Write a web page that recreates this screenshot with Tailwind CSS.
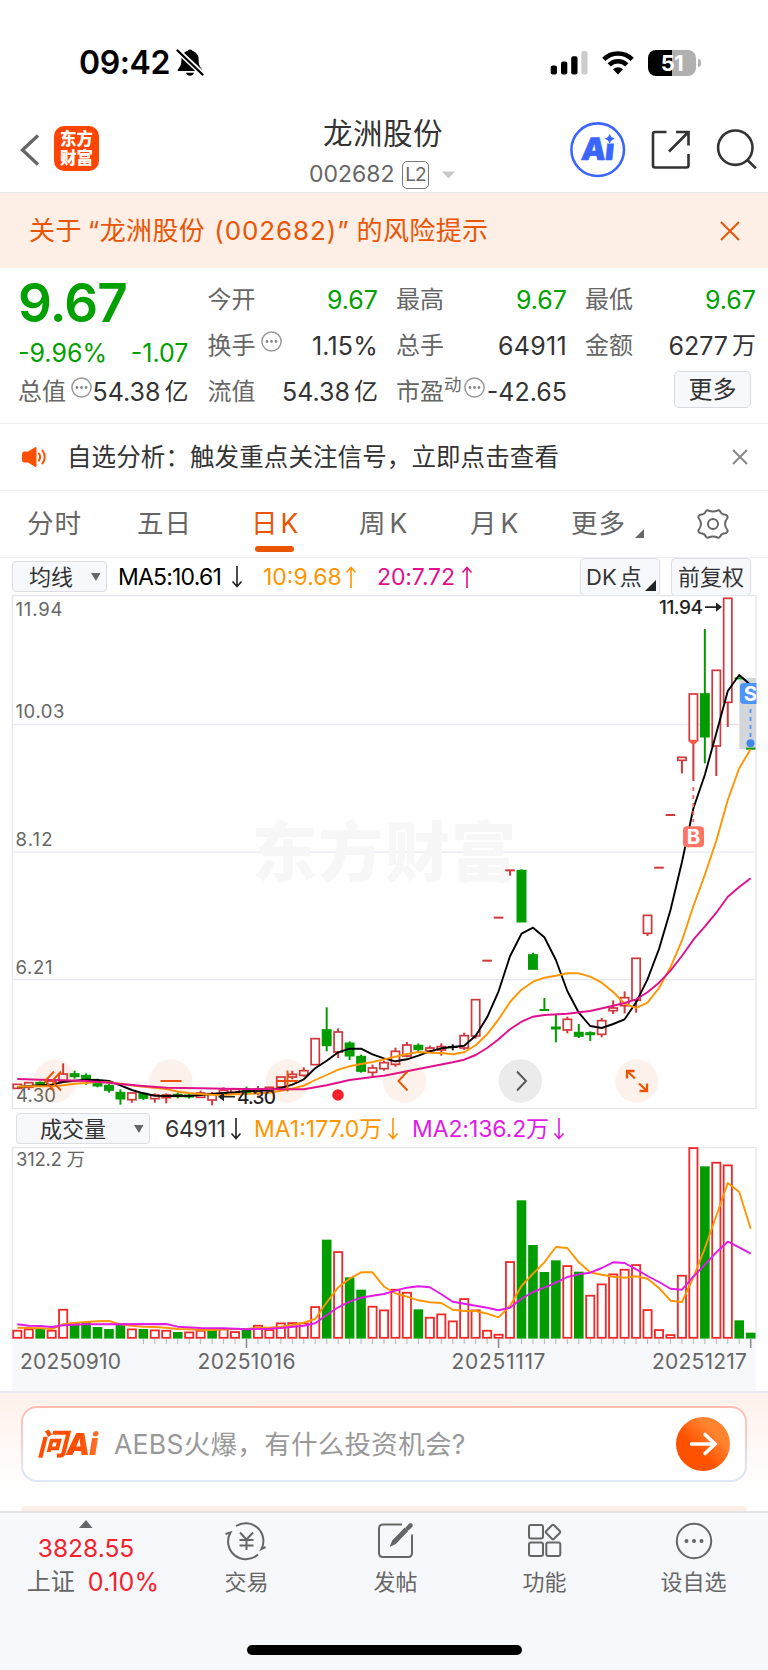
<!DOCTYPE html>
<html lang="zh-CN">
<head>
<meta charset="utf-8">
<title>龙洲股份 002682</title>
<script src="https://cdn.jsdelivr.net/npm/@tailwindcss/browser@4"></script>
</head>
<body class="bg-white">
<main class="relative flex h-[1670px] w-[768px] flex-col overflow-hidden bg-white font-['Inter','Noto_Sans_CJK_SC',sans-serif] font-[399] whitespace-nowrap text-[#333]">

  <!-- status bar -->
  <header class="flex h-[108px] shrink-0 items-start pt-[42px]">
    <div class="flex h-[42px] w-full items-center pl-[79px]">
      <span class="w-[97px] text-[32px] leading-none font-semibold tracking-[-0.4px] text-black">09:42</span>
      <svg class="h-[30px] w-[30px]" viewBox="0 0 30 30"><path d="M14 1.5c1.6 0 2.4.8 2.6 1.6 4 1.2 6 4.400 6 8.400 0 6 1.600 7.500 3.400 9.700.6.900.2 1.900-.8 1.900H2.800c-1 0-1.400-1-.8-1.900 1.800-2.200 3.400-3.700 3.400-9.700 0-4 2-7.200 6-8.400.2-.8 1-1.600 2.600-1.600z"/><path d="M10 24.800h8c-.6 2-2 3-4 3s-3.400-1-4-3z"/><path d="M.5 1.500 27.500 27" stroke="#fff" stroke-width="5.500"/><path d="M1.500 2.500 26.500 26.500" stroke="#000" stroke-width="2.300" stroke-linecap="round"/></svg>
      <svg class="ml-[344px] h-[26px] w-[38px]" viewBox="0 0 38 26"><g fill="#000"><rect x=".7" y="15.500" width="6.300" height="9" rx="2"/><rect x="11" y="11.500" width="6.300" height="13" rx="2"/><rect x="21.200" y="6.200" width="6.300" height="18.300" rx="2"/></g><rect x="31.300" y="1" width="6.300" height="23.500" rx="2" fill="#ccc"/></svg>
      <svg class="ml-[14px] h-[26px] w-[32px]" viewBox="0 0 32 26"><g fill="none" stroke="#000" stroke-width="4.600"><path d="M1.800 9.300a20.300 20.300 0 0 1 28.400 0"/><path d="M7.200 14.800a12.600 12.600 0 0 1 17.600 0"/></g><path d="M16 24.500l-5-5.200a7.400 7.400 0 0 1 10 0z"/></svg>
      <div class="ml-[14px] flex h-[26px] w-[48px] items-center justify-center rounded-[8px] bg-[linear-gradient(90deg,#000_50%,#b0b0b0_50%)] text-[22px] leading-none font-bold tracking-[-0.5px] text-white">51</div>
      <div class="ml-[2px] h-[8px] w-[3px] rounded-r-full bg-[#b5b5b5]"></div>
    </div>
  </header>

  <!-- title bar -->
  <section class="flex h-[85px] shrink-0 border-b border-[#e8e8e8]">
    <svg class="mt-[24px] ml-[18px] h-[36px] w-[24px]" viewBox="0 0 24 36"><path d="M20 3.500 4.500 18 20 32.500" fill="none" stroke="#666" stroke-width="3.300"/></svg>
    <div class="mt-[18px] ml-[12px] flex h-[45px] w-[45px] flex-col items-center justify-center rounded-[10px] bg-[#ff4500] text-[16.500px] leading-[19px] font-black text-white"><span>东方</span><span>财富</span></div>
    <div class="ml-[192px] flex w-[187px] flex-col">
      <div class="mt-[6px] ml-[32px] text-[29.500px] leading-[38px] tracking-[0.500px]">龙洲股份</div>
      <div class="mt-[8px] ml-[18px] flex h-[29px] items-center">
        <span class="w-[93px] text-[23px] leading-none text-[#666]">002682</span>
        <span class="flex h-[28px] w-[27px] items-center justify-center rounded-[5px] border-[1.500px] border-[#777] text-[19px] leading-none tracking-[-0.800px] text-[#666]">L2</span>
        <svg class="ml-[12px] h-[8px] w-[15px]" viewBox="0 0 15 8"><path d="M1 .5h13L7.500 7.500z" fill="#c8c8c8"/></svg>
      </div>
    </div>
    <svg class="ml-[80px] h-[84px] w-[210px] shrink-0" viewBox="558 108 210 84">
      <g fill="none" stroke="#3a66ff"><circle cx="597.700" cy="149.700" r="26.300" stroke-width="2.600"/></g>
      <text x="0" y="0" transform="translate(580.500 160) skewX(-6)" font-family="Inter" font-weight="900" font-size="31" fill="#3a66ff" stroke="#3a66ff" stroke-width=".6" textLength="33">Ai</text>
      <rect x="603.500" y="133" width="13" height="10.500" fill="#fff"/>
      <path d="M609.700 134l1.700 3.100 3.100 1.700-3.100 1.700-1.700 3.100-1.700-3.100-3.100-1.700 3.100-1.700z" fill="#3a66ff"/>
      <g fill="none" stroke="#333" stroke-width="2.600"><path d="M666.500 132H655q-2 0-2 2v31.500q0 2 2 2h31.500q2 0 2-2V154M676 132h12.500v13.500M688 132.500 669 151.500"/><circle cx="735.300" cy="147.700" r="17.200"/><path d="M747.500 160l8.300 8.300"/></g>
    </svg>
  </section>

  <!-- risk notice -->
  <section class="flex h-[75px] shrink-0 items-center bg-[#fdeee6] pl-[29px] text-[#ea5504]">
    <div class="flex w-[691px] text-[26px] leading-none tracking-[0.400px]"><span>关于</span><span class="ml-[6px]">“龙洲股份</span><span class="ml-[9px] tracking-[0.900px]">(002682)”</span><span class="ml-[7px] tracking-[0.400px]">的风险提示</span></div>
    <svg class="h-[20px] w-[20px]" viewBox="0 0 20 20"><path d="M1 1l18 18M19 1 1 19" stroke="#ea5504" stroke-width="2"/></svg>
  </section>

  <!-- quote -->
  <section class="flex h-[156px] shrink-0 gap-[19px] border-b border-[#efefef] pl-[18px] text-[24px] leading-[46px]">
    <div class="flex w-[170.500px] flex-col text-[#00a000]">
      <div class="flex h-[62px] items-center pt-[8px] text-[53px] leading-none font-semibold tracking-[-0.800px]">9.67</div>
      <div class="flex h-[46px] items-center justify-between text-[25px]"><span>-9.96%</span><span>-1.07</span></div>
      <div class="flex h-[32px] items-center text-[#333]"><span class="w-[53px] text-[#666]">总值</span><svg class="mb-[9px] h-[21px] w-[21px]" viewBox="0 0 21 21"><use href="#info"/></svg><span class="ml-auto flex text-[25px]">54.38<span class="ml-[4px] text-[24px]">亿</span></span></div>
    </div>
    <div class="flex w-[170.500px] flex-col pt-[9px]">
      <div class="flex h-[46px] items-center justify-between"><span class="text-[#666]">今开</span><span class="text-[25px] text-[#00a000]">9.67</span></div>
      <div class="flex h-[46px] items-center"><span class="w-[53px] text-[#666]">换手</span><svg class="mb-[9px] h-[21px] w-[21px]" viewBox="0 0 21 21"><use href="#info"/></svg><span class="ml-auto text-[25px] tracking-[0.200px]">1.15%</span></div>
      <div class="flex h-[46px] items-center justify-between"><span class="text-[#666]">流值</span><span class="flex text-[25px]">54.38<span class="ml-[4px] text-[24px]">亿</span></span></div>
    </div>
    <div class="-ml-[1px] flex w-[171px] flex-col pt-[9px]">
      <div class="flex h-[46px] items-center justify-between"><span class="text-[#666]">最高</span><span class="text-[25px] text-[#00a000]">9.67</span></div>
      <div class="flex h-[46px] items-center justify-between"><span class="text-[#666]">总手</span><span class="text-[25px] tracking-[0.300px]">64911</span></div>
      <div class="flex h-[46px] items-center"><span class="text-[#666]">市盈</span><span class="mb-[14px] text-[17.500px] leading-none text-[#666]">动</span><svg class="mb-[9px] ml-[2px] h-[21px] w-[21px]" viewBox="0 0 21 21"><use href="#info"/></svg><span class="ml-auto text-[25px]">-42.65</span></div>
    </div>
    <div class="-ml-[1px] flex w-[171px] flex-col pt-[9px]">
      <div class="flex h-[46px] items-center justify-between"><span class="text-[#666]">最低</span><span class="text-[25px] text-[#00a000]">9.67</span></div>
      <div class="flex h-[46px] items-center justify-between"><span class="text-[#666]">金额</span><span class="flex text-[25px]">6277<span class="ml-[4px] text-[24px]">万</span></span></div>
      <div class="mt-[2px] ml-auto flex h-[37px] w-[77px] -translate-x-[5px] items-center justify-center rounded-[5px] border border-[#d9dbe2] bg-[#f7f8fb] text-[24px] leading-none">更多</div>
    </div>
  </section>

  <!-- signal strip -->
  <section class="flex h-[67px] shrink-0 items-center border-b border-[#efefef] pl-[21px]">
    <svg class="h-[22px] w-[26px]" viewBox="0 0 26 22"><path d="M15.500 2v18q0 1.500-1.500.8L7 16.500H3.500q-2.500 0-2.500-2.500V8q0-2.500 2.500-2.500H7L14 1.200q1.500-.7 1.500.8z" fill="#ff5000"/><g fill="none" stroke="#ff5000" stroke-width="2" stroke-linecap="round"><path d="M18 7.500q2.200 3.500 0 7M21.500 4.500q4.500 6.500 0 13"/></g></svg>
    <span class="ml-[20px] w-[665px] text-[24.500px] leading-none tracking-[0.100px]">自选分析：触发重点关注信号，立即点击查看</span>
    <svg class="h-[16px] w-[16px]" viewBox="0 0 16 16"><path d="M1 1l14 14M15 1 1 15" stroke="#888" stroke-width="2"/></svg>
  </section>

  <!-- period tabs -->
  <nav class="relative flex h-[67px] shrink-0 items-center border-b border-[#efefef] pb-[1px] pl-[27px] text-[26.500px] leading-none tracking-[1px] text-[#666]">
    <span class="w-[110px]">分时</span><span class="w-[114px]">五日</span>
    <span class="w-[108px] text-[#ea5504]">日<span class="ml-[2px]">K</span></span>
    <span class="w-[111px]">周<span class="ml-[3px]">K</span></span>
    <span class="w-[101px]">月<span class="ml-[3px]">K</span></span>
    <span class="w-[64px]">更多</span>
    <svg class="mt-[20px] h-[9px] w-[9px]" viewBox="0 0 9 9"><path d="M9 0v9H0z" fill="#666"/></svg>
    <svg class="ml-[53px] h-[32px] w-[32px]" viewBox="-16 -16 32 32"><path d="M-4.500-13.500Q0-11.500 4.500-13.500 6-14.300 7-12.800 8.500-9.300 12.300-9.300 14.500-9 14.700-6.500 12-3 12 0T14.700 6.500Q14.500 9 12.300 9.300 8.500 9.300 7 12.800 6 14.300 4.500 13.500 0 11.500-4.500 13.500-6 14.300-7 12.800-8.500 9.300-12.300 9.300-14.500 9-14.700 6.500-12 3-12 0T-14.700-6.500Q-14.500-9-12.300-9.300-8.500-9.300-7-12.800-6-14.300-4.500-13.500z" fill="none" stroke="#666" stroke-width="2"/><circle r="5" fill="none" stroke="#666" stroke-width="2"/></svg>
    <i class="absolute bottom-[5px] left-[255px] h-[6px] w-[39px] rounded-full bg-[#ea5504]"></i>
  </nav>

  <!-- moving averages legend -->
  <section class="flex h-[37px] shrink-0 items-center pl-[12px] text-[23px] leading-none">
    <div class="flex h-[31px] w-[95px] items-center rounded-[4px] border border-[#dcdee4] bg-[#f7f8fb] pl-[16px] text-[22px]">均线<svg class="ml-[18px] h-[8px] w-[10px]" viewBox="0 0 10 8"><path d="M0 0h9.500L5 8z" fill="#666"/></svg></div>
    <span class="mt-[2px] ml-[11px] w-[113px] tracking-[-0.800px] text-black">MA5:10.61</span>
    <svg class="h-[22px] w-[12px]" viewBox="0 0 12 22"><path d="M6 0v20M1.500 15.500 6 20.500l4.500-5" fill="none" stroke="#222" stroke-width="1.600"/></svg>
    <span class="mt-[2px] ml-[20px] w-[82px] text-[#ff9500]">10:9.68</span>
    <svg class="h-[22px] w-[12px]" viewBox="0 0 12 22"><path d="M6 22V2M1.500 6.500 6 1.500l4.500 5" fill="none" stroke="#ff9500" stroke-width="1.600"/></svg>
    <span class="mt-[2px] ml-[20px] w-[84px] tracking-[-0.100px] text-[#e0108c]">20:7.72</span>
    <svg class="h-[22px] w-[12px]" viewBox="0 0 12 22"><path d="M6 22V2M1.500 6.500 6 1.500l4.500 5" fill="none" stroke="#e0108c" stroke-width="1.600"/></svg>
    <div class="ml-[107px] flex h-[38px] w-[80px] shrink-0 items-center rounded-[4px] border border-[#dcdee4] bg-[#f7f8fb] pl-[5px] text-[22px]">DK<span class="ml-[3px]">点</span><svg class="mt-[18px] ml-[3px] h-[11px] w-[11px]" viewBox="0 0 11 11"><path d="M11 0v11H0z" fill="#222"/></svg></div>
    <div class="ml-[11px] flex h-[38px] w-[80px] shrink-0 items-center justify-center rounded-[4px] border border-[#dcdee4] bg-[#f7f8fb] text-[22px]">前复权</div>
  </section>

  <!-- candlestick chart -->
  <section class="relative h-[514px] shrink-0">
    <svg class="block h-[514px] w-[768px]" viewBox="0 595 768 514" font-family="Inter, 'Noto Sans CJK SC', sans-serif">
      <g fill="none" stroke="#e6e7ec" stroke-width="1.300"><rect x="12.300" y="595.600" width="743.700" height="513"/></g>
      <g stroke="#e6e7f2" stroke-width="1.300"><path d="M12 724.500H756M12 852.200H756M12 979.700H756"/></g>
      <text x="252" y="876" font-size="65" font-weight="900" fill="#f7f7f7" textLength="264">东方财富</text>
      <rect x="739.300" y="678" width="16.700" height="71" fill="#d3d7dc"/>
      <g id="candles"></g>
      <g id="averages" fill="none" stroke-width="1.900" stroke-linejoin="round"></g>
      <g font-size="18.500" fill="#666">
        <text x="15.500" y="616" textLength="47">11.94</text><text x="15.500" y="717.700" textLength="49">10.03</text><text x="15.500" y="845.500" textLength="37">8.12</text><text x="15.500" y="973.500" textLength="37">6.21</text><text x="16" y="1101.700" textLength="40">4.30</text>
      </g>
      <g font-size="19" font-weight="500" fill="#222">
        <text x="659" y="614.300" textLength="44">11.94</text><text x="237" y="1103.500" textLength="39">4.30</text>
        <path d="M705 606.300h12v1.600h-12zM716 602.500l6 4.600-6 4.600zM235 1096h-12v1.600h12zM224 1092.300l-6 4.500 6 4.500z"/>
      </g>
      <!-- buy and sell marks -->
      <g font-weight="700" font-size="20.500" fill="#fff" text-anchor="middle">
        <path d="M693.300 787v35" stroke="#fb6a58" stroke-width="1.800" stroke-dasharray="4 4"/>
        <path d="M689.300 740h8a4 4 0 0 1-8 0z" fill="#fb5545"/>
        <rect x="683" y="826.300" width="21" height="21" rx="4" fill="#fb7465"/><text x="693.500" y="844.300">B</text>
        <svg x="739" y="678" width="17.500" height="75" viewBox="739 678 17.500 75"><rect x="740" y="683" width="21" height="21" rx="4" fill="#4c94f5"/><text x="750.500" y="701">S</text></svg>
        <path d="M750.500 709v31" stroke="#4c94f5" stroke-width="1.800" stroke-dasharray="4 4"/>
        <circle cx="750.500" cy="743.300" r="4" fill="#4185ea"/>
      </g>
      <!-- chart controls -->
      <g fill="#ea5504" fill-opacity=".08"><circle cx="55" cy="1081" r="21.700"/><circle cx="171" cy="1081" r="21.700"/><circle cx="287.500" cy="1081" r="21.700"/><circle cx="404.500" cy="1081" r="21.700"/><circle cx="636.700" cy="1081" r="21.700"/></g>
      <circle cx="520.300" cy="1081" r="21.700" fill="#ebebeb"/>
      <g fill="none" stroke="#ea5504" stroke-width="1.900">
        <path d="M54 1071.500 45 1081l9 9.500M61 1071.500 52 1081l9 9.500M160.500 1081h21M277 1081h21M287.500 1070.500v21M407.500 1071.500 398.500 1081l9 9.500"/>
        <path d="M627 1078.500v-7.500h7.500M627.500 1071.500l7.500 7M647 1083.500v7.500h-7.500M646.500 1090.500l-7.500-7" stroke-width="2.300"/>
      </g>
      <path d="M517 1071.500l9 9.500-9 9.500" fill="none" stroke="#555" stroke-width="1.900"/>
      <circle cx="338" cy="1095" r="5.800" fill="#f5222d"/>
    </svg>
  </section>

  <!-- volume legend -->
  <section class="flex h-[38px] shrink-0 items-center pl-[16px] text-[23px] leading-none">
    <div class="mt-[1px] flex h-[31px] w-[134px] items-center rounded-[4px] border border-[#dcdee4] bg-[#f7f8fb] pl-[23px] text-[22px]">成交量<svg class="ml-[28px] h-[8px] w-[10px]" viewBox="0 0 10 8"><path d="M0 0h9.500L5 8z" fill="#666"/></svg></div>
    <span class="mt-[2px] ml-[15px] w-[65px] tracking-[-0.300px]">64911</span>
    <svg class="mt-[2px] h-[22px] w-[12px]" viewBox="0 0 12 22"><path d="M6 0v20M1.500 15.500 6 20.500l4.500-5" fill="none" stroke="#222" stroke-width="1.600"/></svg>
    <span class="mt-[2px] ml-[12px] w-[133px] text-[#ff9500]">MA1:177.0万</span>
    <svg class="mt-[2px] h-[22px] w-[12px]" viewBox="0 0 12 22"><path d="M6 0v20M1.500 15.500 6 20.500l4.500-5" fill="none" stroke="#ff9500" stroke-width="1.600"/></svg>
    <span class="mt-[2px] ml-[13px] w-[141px] tracking-[-0.100px] text-[#e01be8]">MA2:136.2万</span>
    <svg class="mt-[2px] h-[22px] w-[12px]" viewBox="0 0 12 22"><path d="M6 0v20M1.500 15.500 6 20.500l4.500-5" fill="none" stroke="#e01be8" stroke-width="1.600"/></svg>
  </section>

  <!-- volume chart -->
  <section class="h-[244px] shrink-0">
    <svg class="block h-[244px] w-[768px]" viewBox="0 1147 768 244" font-family="Inter, 'Noto Sans CJK SC', sans-serif">
      <rect x="12" y="1338.500" width="744" height="53" fill="#f7f8fb"/>
      <path d="M12.300 1339V1147.600H756V1339" fill="none" stroke="#e6e7ec" stroke-width="1.300"/>
      <g id="ticks" stroke="#b4b4b4" stroke-width="1"></g>
      <g id="volume"></g>
      <g id="volumeAverages" fill="none" stroke-width="1.900" stroke-linejoin="round"></g>
      <g fill="#666"><text x="16" y="1165.700" font-size="18.500" textLength="69">312.2 万</text>
        <g font-size="21"><text x="20" y="1368.700" textLength="101">20250910</text><text x="197.500" y="1368.700" textLength="98">20251016</text><text x="451.500" y="1368.700" textLength="94">20251117</text><text x="652" y="1368.700" textLength="95">20251217</text></g></g>
    </svg>
  </section>

  <!-- ask bar -->
  <section class="flex h-[120px] shrink-0 flex-col border-t-2 border-[#e8e8ee] bg-[linear-gradient(180deg,#fff1eb,#fff_85%)] pt-[13px]">
    <div class="mx-[21px] h-[76px] rounded-[16px] bg-[linear-gradient(180deg,#ffbbae,#e2e0f0_80%,#dce7f5)] p-[2px]">
      <div class="flex h-full items-center rounded-[14px] bg-white pl-[14px] leading-none">
        <span class="w-[77px] bg-[linear-gradient(90deg,#ff4e00_55%,#ff9058)] bg-clip-text text-[30px] leading-[38px] font-black tracking-[-0.800px] text-transparent italic">问Ai</span>
        <span class="w-[562px] text-[26.500px] tracking-[0.300px] text-[#999]"><span class="tracking-[0.300px]">AEBS</span>火爆，有什么投资机会?</span>
        <svg class="h-[54px] w-[54px]" viewBox="0 0 54 54"><defs><linearGradient id="go" x1=".2" y1=".9" x2=".9" y2=".2"><stop offset=".35" stop-color="#ff5200"/><stop offset=".8" stop-color="#ff8430"/></linearGradient></defs><circle cx="27" cy="27" r="27" fill="url(#go)"/><path d="M15.500 27H39M29 17.500l10 9.500-10 9.500" fill="none" stroke="#fff" stroke-width="3.600" stroke-linecap="round"/></svg>
      </div>
    </div>
    <div class="mx-[21px] mt-auto h-[5px] rounded-t-full bg-[#fdeee6]"></div>
  </section>

  <!-- bottom bar -->
  <footer class="flex h-[159px] shrink-0 flex-col border-t-2 border-[#e2e3e7] bg-[#f7f8fb] text-[22px] leading-none text-[#666]">
    <div class="flex h-[132px] items-start">
      <div class="flex w-[172px] flex-col items-center pt-[7px]">
        <svg class="h-[8px] w-[14px]" viewBox="0 0 14 8"><path d="M0 8h13.500L7 0z" fill="#666"/></svg>
        <span class="mt-[8px] text-[24.500px] text-[#f5222d]">3828.55</span>
        <span class="mt-[9px] ml-[14px] flex items-center text-[24px]">上证<span class="ml-[13px] text-[25px] tracking-[0.200px] text-[#f5222d]">0.10%</span></span>
      </div>
      <div class="flex w-[149px] flex-col items-center pt-[7px]">
        <svg class="h-[42px] w-[46px]" viewBox="224 1521 46 42"><g fill="none" stroke="#666" stroke-width="2"><path d="M236 1527a17.800 17.800 0 0 1 25.500 23l4-2M258 1555.500a17.800 17.800 0 0 1-27.500-22l-5 1.500"/><path d="M240 1533.500l6.500 7 6.500-7M239.500 1541h14M239.500 1546.500h14M246.500 1540.500v10.500"/></g></svg>
        <span class="mt-[9px]">交易</span>
      </div>
      <div class="flex w-[149px] flex-col items-center pt-[7px]">
        <svg class="h-[42px] w-[42px]" viewBox="375 1521 42 42"><path d="M402 1525.500H383q-4 0-4 4V1554q0 4 4 4h25q4 0 4-4v-18.500" fill="none" stroke="#666" stroke-width="2"/><path d="M391 1546.500l1.800-4.500 12-12.500 2.500 2.500-12 12.500z" fill="#666" stroke="#666" stroke-width="1.500"/><path d="M408 1529l2.500-2.500" stroke="#666" stroke-width="4.500" stroke-linecap="round"/></svg>
        <span class="mt-[9px]">发帖</span>
      </div>
      <div class="flex w-[149px] flex-col items-center pt-[7px]">
        <svg class="h-[42px] w-[42px]" viewBox="524 1521 42 42"><g fill="none" stroke="#666" stroke-width="2"><rect x="529" y="1526" width="14" height="13.500" rx="2"/><rect x="529" y="1543.500" width="14" height="13.500" rx="2"/><rect x="546.300" y="1543.500" width="14" height="13.500" rx="2"/><rect x="547.500" y="1527.500" width="11" height="11" rx="1.500" transform="rotate(45 553 1533)"/></g></svg>
        <span class="mt-[9px]">功能</span>
      </div>
      <div class="flex w-[149px] flex-col items-center pt-[7px]">
        <svg class="h-[42px] w-[42px]" viewBox="-21 -21 42 42"><circle r="17.200" fill="none" stroke="#666" stroke-width="2"/><g fill="#666"><circle cx="-7.500" r="2"/><circle r="2"/><circle cx="7.500" r="2"/></g></svg>
        <span class="mt-[9px]">设自选</span>
      </div>
    </div>
    <div class="mx-auto h-[10px] w-[275px] rounded-full bg-black"></div>
  </footer>
</main>

<svg class="absolute h-0 w-0"><defs><g id="info"><circle cx="10.500" cy="10.500" r="9.600" fill="none" stroke="#999" stroke-width="1.500"/><g fill="#888"><circle cx="6" cy="10.500" r="1.400"/><circle cx="10.500" cy="10.500" r="1.400"/><circle cx="15" cy="10.500" r="1.400"/></g></g></defs></svg>

<script>
const NS = 'http://www.w3.org/2000/svg';
const X = i => 17.3 + 11.459 * i;
const add = (id, tag, attrs) => {
  const el = document.createElementNS(NS, tag);
  for (const k in attrs) el.setAttribute(k, attrs[k]);
  document.getElementById(id).appendChild(el);
};
const RED = '#d0383c', GREEN = '#009c00';

// Each band: origin in px, first index, then [kind, bodyTop, bodyBottom, high, low] in thirds of a px.
const bands = [
  [980, 0, [['r',313,325],['r',308,322,308,330],['g',308,318,304],['r',303,314,303,320],['r',282,304,250],['g',282,289,272,296],['g',287,299,280,314],['g',308,317,296,322],['g',317,330,312,338],['g',338,356,328,374],['r',339,359,339,368],['g',341,354,336,360],['r',345,356,340,368],['r',345,353,340,370],['g',344,349,338,355],['g',346,350,342,356],['r',339,352,332],['r',341,360,336,376],['r',331,340,322,345],['r',328,338],['g',328,336,320,345],['r',328,340,318,346],['r',322,332],['r',291,321],['r',283,291,272,298],['r',272,286,262,290],['r',176,254],['g',150,196,82,214],['r',156,216,145,234],['g',190,227,184,240],['g',230,273,224,278],['r',264,277,254,288]]],
  [820, 32, [['r',728,746,722,752],['r',694,733,683,740],['r',675,708,666,712],['g',677,688,670,695],['r',684,692,677,698],['r',680,690,670,707],['k',681,682,673,691],['r',647,684,638,690],['r',539,648,539,656],['r',422,422],['r',293,293],['r',151,152,151,167],['g',152,305,148],['g',405,447,398],['g',570,571,534],['g',622,626,585,667],['r',598,630,590,640],['g',638,648,612,654],['g',639,643,634,663],['r',602,643,594,652],['r',564,572,541,582],['r',533,557,514,580],['r',415,541,415,578],['r',286,340,286,348],['r',143,143]]],
  [490, 57, [['r',975,975],['r',802,811,802,850],['r',612,752,612,873],['g',612,740,417,820],['r',541,768,541,858],['r',325,637,325,711],['g',565,565],['g',776,776]]]
];
for (const [y0, first, rows] of bands) rows.forEach(([kind, t, b, hi, lo], n) => {
  const x = X(first + n), Y = v => y0 + v / 3;
  const c = kind === 'r' ? RED : kind === 'g' ? GREEN : '#111';
  if (hi !== undefined && hi < t) add('candles', 'path', {d: `M${x} ${Y(hi)}V${Y(t)}`, stroke: c, 'stroke-width': 2});
  if (lo !== undefined && lo > b) add('candles', 'path', {d: `M${x} ${Y(b)}V${Y(lo)}`, stroke: c, 'stroke-width': 2});
  if (b - t < 3) add('candles', 'rect', {x: x - 4.8, y: Y(t) - 1, width: 9.600, height: 2, fill: c});
  else add('candles', 'rect', {x: x - 4.1, y: Y(t), width: 8.200, height: (b - t) / 3, fill: kind === 'g' ? c : '#fff', stroke: c, 'stroke-width': 1.700});
});

const line = (id, color, parts) => {
  const pts = [];
  for (const [y0, data] of parts) for (const [i, v] of data) pts.push(X(i).toFixed(1) + ',' + (y0 + v / 3).toFixed(1));
  add(id, 'polyline', {points: pts.join(' '), stroke: color});
};
const run = (start, values) => values.map((v, n) => [start + n, v]);

line('averages', '#000', [
  [980, run(0, [322,318,316,314,306,302,299,300,303,316,330,340,347,348,347,348,345,342,339,337,334,333,330,324,314,298,265,242,217,206,206,223])],
  [820, run(32, [715,724,718,707,694,685,681,677,647,592,514,409,341,323,352,420,513,578,618,624,612,598,547,478,387,270,127])],
  [490, run(59, [955,855,730,603,555,585])]]);
line('averages', '#ff9500', [
  [980, run(0, [320,319,319,319,316,311,309,306,307,311,316,320,323,327,335,339,342,344,345,343,342,340,338,332,326,317,300,285,269,259,252,246])],
  [820, run(32, [718,710,702,696,698,699,703,697,676,643,598,546,509,485,473,467,460,460,470,488,516,551,564,548,504,442,362,258,165,62])],
  [490, run(62, [930,835,777])]]);
line('averages', '#e0108c', [
  [980, [[0,297],[2,299],[4,301],[6,303],[8,308],[9,312],[11,318],[13,323],[16,325],[18,326],[20,327],[23,328],[25,328],[27,316],[29,300],[31,291]]],
  [820, [[32,767],[34,754],[36,740],[38,727],[39,719],[40,705],[41,684],[42,658],[43,628],[44,605],[45,590],[46,585],[48,581],[50,573],[52,557],[53,549],[54,538],[55,517],[56,488],[57,452],[58,408],[59,359],[60,320],[61,278],[62,230],[63,201],[64,175]]]]);

// Volume bar tops; falling days are solid green.
const tops = [571,567,567,571,508,548,546,561,567,553,567,567,570,571,576,576,571,570,567,575,570,556,569,549,548,549,500,299,335,412,449,499,510,448,457,508,532,522,543,476,510,571,583,365,181,315,396,361,377,395,466,432,402,388,374,509,569,584,406,23,79,67,75,541,578];
const down = new Set([2,5,6,7,8,9,11,14,17,20,27,29,30,35,44,45,46,47,49,60,63,64]);
tops.forEach((t, i) => {
  const y = 1140 + t / 3, bottom = 1338.600;
  if (down.has(i)) add('volume', 'rect', {x: X(i) - 4.800, y, width: 9.600, height: bottom - y, fill: GREEN});
  else add('volume', 'rect', {x: X(i) - 4.100, y: y + .4, width: 8.200, height: bottom - y - 1.200, fill: '#fff', stroke: '#f02828', 'stroke-width': 1.800});
});
line('volumeAverages', '#ff9500', [[1140, run(0, [563,564,565,567,553,549,546,544,543,553,557,560,561,563,567,568,569,570,568,567,567,563,563,560,555,548,537,487,442,416,397,397,440,460,470,481,487,489,509,513,513,521,532,498,438,401,367,321,324,367,397,404,410,413,409,416,444,482,486,412,325,228,129,155,266])]]);
line('volumeAverages', '#e01be8', [[1140, [[0,553],[1,557],[2,558],[3,561],[4,556],[6,553],[13,552],[14,560],[16,564],[18,565],[20,568],[22,566],[23,564],[25,557],[26,550],[27,525],[28,502],[29,485],[30,473],[31,467],[32,462],[33,452],[34,443],[35,439],[36,442],[37,463],[38,485],[39,491],[41,503],[42,511],[43,503],[44,476],[45,456],[46,443],[47,428],[48,411],[49,403],[50,398],[51,384],[52,367],[53,369],[54,388],[55,408],[56,426],[57,446],[58,449],[59,410],[60,374],[61,337],[62,305],[63,322],[64,341]]]]);
for (let i = 11; i < 65; i++) {
  const major = i === 20 || i === 42 || i === 64;
  add('ticks', 'path', {d: `M${X(i)} 1339V${major ? 1348 : 1344}`, stroke: major ? '#888' : '#b4b4b4', 'stroke-width': major ? 1.500 : 1});
}
</script>
</body>
</html>
